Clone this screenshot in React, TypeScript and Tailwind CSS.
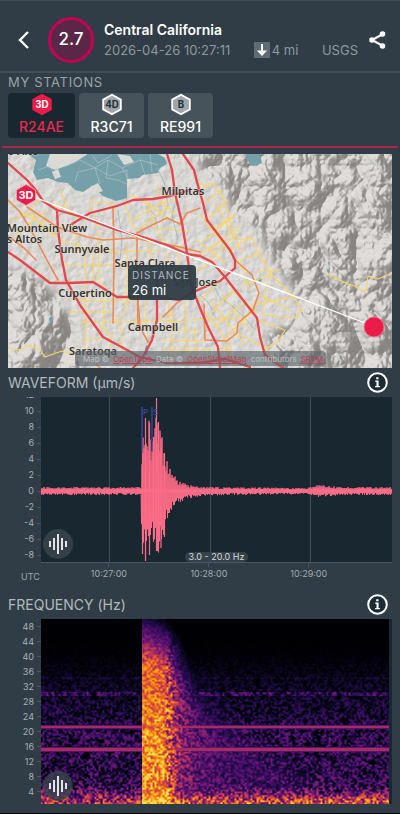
import { useEffect, useRef } from "react";

function createRandom(seed: number) {
  let state = seed;
  return () => {
    state = (state * 1664525 + 1013904223) % 4294967296;
    return state / 4294967296;
  };
}

function interpolate(points: number[][], x: number) {
  if (x <= points[0][0]) return points[0][1];
  for (let i = 1; i < points.length; i++) {
    const [x0, y0] = points[i - 1];
    const [x1, y1] = points[i];
    if (x <= x1) return y0 + ((y1 - y0) * (x - x0)) / (x1 - x0);
  }
  return points[points.length - 1][1];
}

/* ---------- header ---------- */

function Header() {
  return (
    <header className="flex h-[73px] items-center border-t border-b-2 border-t-[#3f4d55] border-b-[#414e57] pt-2 pr-2 pl-3">
      <button type="button" aria-label="Back" className="flex h-8 w-6 items-center justify-center">
        <svg viewBox="0 0 12 18" className="h-[18px] w-3" fill="none" stroke="#fff" strokeWidth="2.4">
          <path d="M10 1 2 9l8 8" />
        </svg>
      </button>
      <div className="ml-3 flex size-[46px] shrink-0 items-center justify-center rounded-full border-3 border-[#c40250] bg-[#5b2748] text-[17px] font-medium text-white">
        2.7
      </div>
      <div className="ml-2.5 min-w-0 flex-1">
        <h1 className="text-sm leading-5 font-semibold text-white">Central California</h1>
        <div className="flex h-5 items-center text-[13px] leading-5 text-[#8f989d]">
          <time>2026-04-26 10:27:11</time>
          <span className="ml-auto flex items-center gap-0.5">
            <svg viewBox="0 0 16 16" className="size-4">
              <path d="M0 0h16v16H0z" fill="#5f6b72" />
              <path d="M8 2v8" stroke="#fff" strokeWidth="2" />
              <path d="M3 8.500 8 14l5-5.500z" fill="#fff" />
            </svg>
            4 mi
          </span>
          <span className="mr-1 ml-auto">USGS</span>
        </div>
      </div>
      <button type="button" aria-label="Share" className="flex h-8 w-[30px] items-center justify-center">
        <svg viewBox="0 0 18 20" className="h-[20px] w-[18px]" fill="#fff">
          <path d="M15 4 4 10l11 6" fill="none" stroke="#fff" strokeWidth="2" />
          <circle cx="14.500" cy="4" r="2.800" />
          <circle cx="4" cy="10" r="2.800" />
          <circle cx="14.500" cy="16" r="2.800" />
        </svg>
      </button>
    </header>
  );
}

/* ---------- stations ---------- */

const STATIONS = [
  { name: "R24AE", kind: "3D", active: true },
  { name: "R3C71", kind: "4D", active: false },
  { name: "RE991", kind: "B", active: false },
];

function Hexagon({ label, active }: { label: string; active: boolean }) {
  return (
    <svg viewBox="0 0 24 26" className="h-[26px] w-6">
      <path
        d="M12 2 22 7.500v11L12 24 2 18.500v-11z"
        fill={active ? "#ea1c48" : "#a0a6ab"}
        stroke={active ? "#ea1c48" : "#fff"}
        strokeWidth="2"
      />
      <text x="12" y="17" textAnchor="middle" className="font-['Inter',sans-serif] text-[11px] font-bold" fill={active ? "#fff" : "#22303a"}>
        {label}
      </text>
    </svg>
  );
}

function Stations() {
  return (
    <section className="mx-0.5 border-b-2 border-[#a82a48] px-1.5 pb-2">
      <h2 className="h-5 text-[13px] leading-[18px] tracking-wider text-[#9aa2a6]">MY STATIONS</h2>
      <div className="flex gap-1">
        {STATIONS.map((s) => (
          <button
            key={s.name}
            type="button"
            aria-pressed={s.active}
            className={
              s.active
                ? "flex h-[45px] w-[67px] flex-col items-center rounded bg-[#182730] text-[#ea2a4c]"
                : "flex h-[45px] w-[65px] flex-col items-center rounded bg-[#46535b] text-white"
            }
          >
            <Hexagon label={s.kind} active={s.active} />
            <span className="text-sm leading-[22px] font-medium">{s.name}</span>
          </button>
        ))}
      </div>
    </section>
  );
}

/* ---------- map ---------- */

const RED_ROADS = [
  "M8 163 27 180 35 189 43 201 57 210 82 217 117 230 143 237 167 245 187 254 200 256 212 262 225 277 243 300 257 318 260 337 265 355 283 368",
  "M72 224 90 213 117 206 133 200 153 199 170 196 190 190",
  "M167 154 172 170 175 193 182 223 187 253 190 275 193 290 200 308 208 327 218 347 220 368",
  "M183 154 194 170 197 182 203 203 207 220 220 237 230 250 235 260 235 268 220 281 200 289 190 294 180 300 157 297 117 297 93 282 68 283 50 283 20 260 8 252",
  "M57 210 58 230 62 260 66 280 80 305 103 337 140 357 166 363 200 363 225 359 250 367",
  "M157 276 157 320 152 340 143 357 133 368",
];

const ORANGE_ROADS = [
  "M8 200 20 212 30 228 48 262 58 280",
  "M8 236 24 248 36 260",
  "M27 207 57 227 87 237 103 240 133 238 180 247 200 252",
  "M113 208 114 260 113 323",
  "M138 330 137 260 137 233 150 226 167 218 180 224 187 213 200 208",
  "M235 260 252 275 259 293 253 310 238 323 237 333 227 341 205 340 204 304",
  "M138 300 140 327 148 342",
  "M163 317 177 303 193 290",
  "M86 352 100 368",
];

const YELLOW_ROADS = [
  "M90 213 91 201 113 204 114 210",
  "M20 212 40 222 60 240 90 250 118 252 160 250",
  "M62 265 115 265 160 267 200 270",
  "M70 250 112 250M70 300 113 301 135 300",
  "M8 222 25 215 40 200M15 235 45 210",
  "M85 252 86 320 85 352M98 240 99 282",
  "M80 322 113 322 122 322 160 320 185 322",
  "M68 312 113 312M86 340 102 338",
  "M125 203 130 220 137 233M130 195 150 205 168 218",
  "M146 199 150 215 160 235 167 245",
  "M133 220 157 205 174 200M140 228 168 207",
  "M127 245 127 297 126 310 115 322",
  "M150 240 150 300M166 250 168 300 170 325",
  "M157 186 160 200 175 215M160 228 190 232",
  "M178 245 178 300M145 280 190 280",
  "M200 189 213 183 222 196 228 212 232 230 240 240 252 238 258 252 263 262",
  "M204 204 222 190M207 220 228 200M212 230 235 215M196 182 210 186",
  "M200 215 232 255M215 202 242 252M205 240 235 215M210 250 240 226",
  "M228 252 252 236M236 262 262 252M196 240 224 262",
  "M200 270 235 235M200 255 222 240",
  "M240 262 250 290M262 258 272 275 293 297",
  "M258 272 280 270M242 285 272 275M252 305 294 297 302 311 295 318 263 315",
  "M262 296 290 310M270 270 262 314",
  "M225 277 200 300M235 288 212 312M245 302 217 325M252 312 225 338",
  "M210 300 245 345M205 312 232 348M222 295 250 330M232 290 256 312",
  "M190 320 240 318M160 340 205 341M163 350 232 350",
  "M172 310 172 360M185 300 186 365M195 328 197 366M160 330 200 330",
  "M258 320 285 330 278 342 264 350M240 335 262 345 280 365",
  "M225 345 235 368M100 327 112 335 108 355M120 325 122 350",
  "M8 348 20 350 30 345 40 350 45 357 62 351 72 355 86 352",
  "M327 274 340 280 348 284 355 286 366 292 368 276 378 279 392 273",
  "M45 202 66 207 80 220M60 190 68 207M30 213 52 235M48 216 38 232",
  "M60 230 75 222M72 224 80 250M95 215 100 240",
  "M103 283 104 330M145 300 147 330M93 254 94 280",
];

function Road({ paths, color, width }: { paths: string[]; color: string; width: number }) {
  return (
    <g fill="none" stroke={color} strokeWidth={width} strokeLinejoin="round" strokeLinecap="round">
      {paths.map((d) => (
        <path key={d} d={d} />
      ))}
    </g>
  );
}

const TOWNS = [
  { name: "Palo Alto", x: 15, y: 155 },
  { name: "Milpitas", x: 183, y: 195 },
  { name: "Mountain View", x: 47, y: 232 },
  { name: "Los Altos", x: 18, y: 243 },
  { name: "Sunnyvale", x: 82, y: 253 },
  { name: "Santa Clara", x: 145, y: 267 },
  { name: "San Jose", x: 195, y: 286 },
  { name: "Cupertino", x: 85, y: 297 },
  { name: "Campbell", x: 153, y: 331 },
  { name: "Saratoga", x: 93, y: 355 },
];

function DistanceMap() {
  return (
    <section aria-label="Distance map" className="relative mx-2 mt-1.5 overflow-hidden">
      <svg viewBox="8 154 384 214" className="block w-full" preserveAspectRatio="xMidYMid slice">
        <defs>
          <filter id="relief" x="0" y="0" width="100%" height="100%" colorInterpolationFilters="sRGB">
            <feTurbulence type="turbulence" baseFrequency="0.014 0.012" numOctaves="5" seed="23" />
            <feGaussianBlur stdDeviation="0.500" />
            <feDiffuseLighting surfaceScale="24" diffuseConstant="1.050" lightingColor="#fff">
              <feDistantLight azimuth="215" elevation="50" />
            </feDiffuseLighting>
            <feComponentTransfer>
              <feFuncR type="table" tableValues="0.530 0.550 0.590 0.650 0.740 0.830 0.880" />
              <feFuncG type="table" tableValues="0.520 0.540 0.580 0.640 0.730 0.820 0.870" />
              <feFuncB type="table" tableValues="0.510 0.530 0.570 0.630 0.715 0.805 0.855" />
            </feComponentTransfer>
          </filter>
          <filter id="plain" x="0" y="0" width="100%" height="100%" colorInterpolationFilters="sRGB">
            <feTurbulence type="fractalNoise" baseFrequency="0.120" numOctaves="3" seed="4" />
            <feDiffuseLighting surfaceScale="1" diffuseConstant="1.100" lightingColor="#fff">
              <feDistantLight azimuth="215" elevation="52" />
            </feDiffuseLighting>
            <feComponentTransfer>
              <feFuncR type="linear" slope="0.450" intercept="0.460" />
              <feFuncG type="linear" slope="0.450" intercept="0.453" />
              <feFuncB type="linear" slope="0.450" intercept="0.443" />
            </feComponentTransfer>
          </filter>
          <filter id="soften">
            <feGaussianBlur stdDeviation="4" />
          </filter>
          <mask id="hills" maskUnits="userSpaceOnUse" x="8" y="154" width="384" height="214">
            <g fill="#fff" filter="url(#soften)">
              <path d="M200 140h210v240H288l-14-22-8-24 22-10 12-16-8-22-22-28-10-26-26-20-12-26-22-16z" />
              <path d="M0 268l30 4 24 22 16 22 10 24-2 14 20 30H0z" />
            </g>
          </mask>
        </defs>
        <rect x="8" y="154" width="384" height="214" fill="#dcdad7" />
        <rect x="8" y="154" width="384" height="214" filter="url(#plain)" />
        <g mask="url(#hills)">
          <rect x="8" y="154" width="384" height="214" filter="url(#relief)" />
        </g>
        <g fill="#76a0a9">
          <path d="M28 154 36 160 33 172 37 180 48 178 58 182 68 183 75 190 83 192 92 186 103 196 116 201 127 198 127 183 127 179 139 178 143 175 158 173 160 168 167 164 165 158 158 154z" />
          <path d="M246 154 249 163 253 166 262 163 260 154z" />
          <path d="M256 279 262 278 261 282z M326 268l4 3-1 3z M49 318l3-2 1 4-3 5z M146 345l3 2-2 8-3-2z" />
        </g>
        <g fill="#dad9d6">
          <path d="M50 154 88 154 75 162 66 166 55 170 46 166z" />
          <path d="M90 187 98 183 103 191 96 193z M117 154 130 156 134 162 124 165z M52 172l6-3 3 8-6 2z" />
        </g>
        <g fill="none" stroke="#c3d0d2" strokeWidth="0.500">
          <path d="M66 166 80 160 95 168 108 160 122 168 140 160 158 165M75 182 78 172 95 168 100 184M108 160 106 178 118 180 127 184M95 168 110 176 127 170 127 182M122 168 128 178M140 160 145 175M38 170 50 166 56 180M92 155 98 163 112 155M150 154 152 172" />
        </g>
        <g fill="none" stroke="#8fb3ba" strokeWidth="0.700">
          <path d="M157 167 165 185 168 205 162 220M145 205 155 215 158 230M118 210 122 240 120 260M213 284 220 298 232 306 245 318 255 330M200 295 208 302 216 318M176 200 172 215 178 240" />
        </g>
        <Road paths={YELLOW_ROADS} color="#fad568" width={1.1} />
        <Road paths={ORANGE_ROADS} color="#ee8a51" width={1.6} />
        <Road paths={RED_ROADS} color="#e2474b" width={2.3} />
        <g textAnchor="middle" className="font-['Noto_Sans','Open_Sans',sans-serif] text-[11px] font-semibold" fill="#38332e" stroke="#e4e2df" strokeOpacity="0.500" strokeWidth="1.500" paintOrder="stroke">
          {TOWNS.map((t) => (
            <text key={t.name} x={t.x} y={t.y}>
              {t.name}
            </text>
          ))}
        </g>
        <path d="M26 194 373 326" stroke="#fff" strokeWidth="1.300" />
        <path d="M26 184.500 35.500 190v10L26 205.500 16.500 200v-10z" fill="#ea1c48" stroke="#f0a0ae" strokeWidth="1" />
        <text x="26" y="199" textAnchor="middle" fill="#fff" className="font-['Inter',sans-serif] text-[11px] font-bold">
          3D
        </text>
        <circle cx="374" cy="327" r="10" fill="#ea1c48" stroke="#ee6f86" strokeWidth="1" />
      </svg>
      <div className="absolute top-[111px] left-[120px] h-[35px] w-[68px] rounded bg-[#2f3d46]/95 px-1 pt-0.5 text-white">
        <div className="text-[10px] leading-4 tracking-widest text-[#b5bbbe]">DISTANCE</div>
        <div className="text-[13px] leading-[14px]">26 mi</div>
      </div>
      <div className="absolute bottom-0.5 left-[67px] flex h-[15px] w-[251px] items-center gap-1 rounded-sm bg-[#5b666c]/65 pl-2 text-[8px] whitespace-nowrap text-[#bcc0c1]">
        <span>Map ©</span>
        <a href="#opentopomap" className="text-[#bc4355] underline">OpenTopo</a>
        <span>Data ©</span>
        <a href="#openstreetmap" className="text-[#bc4355] underline">OpenStreetMap</a>
        <span>contributors</span>
        <a href="#srtm" className="text-[#bc4355] underline">SRTM</a>
      </div>
    </section>
  );
}

/* ---------- charts ---------- */

function ChartTitle({ children }: { children: string }) {
  return (
    <div className="flex h-[29px] items-center justify-between pr-3 pl-2">
      <h2 className="text-sm text-[#b3b9bc]">{children}</h2>
      <button type="button" aria-label={"About " + children} className="size-[21px]">
        <svg viewBox="0 0 21 21" className="size-[21px]">
          <circle cx="10.500" cy="10.500" r="9.300" fill="#1b2a33" stroke="#fff" strokeWidth="2" />
          <path d="M9.200 5.200h2.300v2H9.200zM8.300 8.600h3.300v5.300h1.300v1.300H8.100v-1.300h1.400V9.900H8.300z" fill="#fff" />
        </svg>
      </button>
    </div>
  );
}

function SoundButton({ label }: { label: string }) {
  return (
    <button type="button" aria-label={label} className="absolute bottom-[3px] left-0.5 size-[30px] rounded-full bg-[#3a464e]/80">
      <svg viewBox="0 0 30 30" className="size-[30px]" stroke="#e3e3e6" strokeWidth="2">
        <path d="M7 12v6M11 9v12M15 5v20M19 9v12M23 12v6" />
      </svg>
    </button>
  );
}

const TOP_ENVELOPE = [
  [0, 4], [100, 4], [101, 40], [102, 56], [104, 76], [106, 58], [108, 71], [110, 50], [112, 54], [113, 72],
  [115, 97], [116, 97], [117, 76], [119, 68], [121, 56], [123, 44], [126, 30], [130, 21], [135, 13],
  [140, 9], [148, 6], [160, 4], [185, 4], [265, 3], [277, 6], [290, 5], [300, 4], [351, 4],
];
const BOTTOM_ENVELOPE = [
  [0, 4], [100, 4], [101, 66], [104, 73], [107, 68], [109, 47], [112, 52], [114, 64], [118, 62], [121, 54],
  [123, 50], [126, 30], [130, 24], [134, 14], [139, 12], [145, 8], [160, 5], [185, 4], [265, 3], [277, 6],
  [290, 5], [300, 4], [351, 4],
];

function buildTrace() {
  const random = createRandom(27);
  const zero = 94;
  let path = "M0 94";
  for (let i = 0; i < 702; i++) {
    const x = i / 2;
    const strength = 0.5 + 0.5 * random();
    const up = i % 2 === 0;
    const y = up ? zero - interpolate(TOP_ENVELOPE, x) * strength : zero + interpolate(BOTTOM_ENVELOPE, x) * strength;
    path += "L" + x + " " + y.toFixed(1);
  }
  return path;
}

const TRACE = buildTrace();
/* Tallest single swings of the P and S arrivals, above and below the zero line. */
const PEAKS = "M101.500 56V157M104.500 21V164M108.500 26V158M112.500 40V142M115.500 1V154M117.500 25V152M120 42V151M123.500 56V140";
const AMPLITUDES = [12, 10, 8, 6, 4, 2, 0, -2, -4, -6, -8];
const TIMES = ["10:27:00", "10:28:00", "10:29:00"];

function Waveform() {
  return (
    <section>
      <ChartTitle>WAVEFORM (µm/s)</ChartTitle>
      <div className="flex pr-2">
        <div className="flex h-[166px] w-[41px] flex-col justify-end overflow-hidden">
          {AMPLITUDES.map((a) => (
            <div key={a} className="flex h-4 shrink-0 items-center justify-end gap-[3px] text-[9px] text-[#a9b0b4]">
              {a}
              <i className="h-px w-1 bg-[#4c5961]" />
            </div>
          ))}
        </div>
        <div className="relative h-[166px] flex-1 border-b border-[#4a5860]">
          <svg viewBox="0 0 351 165" preserveAspectRatio="none" className="block h-full w-full bg-[#192830]">
            <path d="M68.500 0v165M169.500 0v165M269.500 0v165" stroke="#3f4c55" strokeWidth="1.200" />
            <path d={TRACE} fill="none" stroke="#fd6d88" strokeWidth="0.900" />
            <path d={PEAKS} fill="none" stroke="#fd6d88" strokeWidth="1.200" />
            <path d="M0 94H351" stroke="#fd6d88" strokeWidth="3" />
            <path d="M101 10v45M111 10v45" stroke="#3d4da8" strokeWidth="1.200" />
            <g fill="#3d4da8" className="font-['Inter',sans-serif] text-[8px]">
              <text x="102" y="18">P</text>
              <text x="112" y="18">S</text>
            </g>
          </svg>
          <SoundButton label="Play waveform" />
          <div className="absolute bottom-0 left-1/2 -translate-x-1/2 rounded-md bg-[#35424a] px-1 text-[9px] leading-[10px] whitespace-nowrap text-[#d5d8da]">
            3.0 - 20.0 Hz
          </div>
        </div>
      </div>
      <div className="flex h-[27px] pr-2 text-[9px] text-[#a3aaae]">
        <div className="w-[41px] pt-2 pl-[21px] leading-3">UTC</div>
        <div className="grid flex-1 grid-cols-[3fr_3fr_3fr_1fr] pl-[18px]">
          {TIMES.map((t) => (
            <div key={t} className="flex flex-col items-center leading-3">
              <i className="mb-px h-1 w-px bg-[#4a5860]" />
              {t}
            </div>
          ))}
        </div>
      </div>
    </section>
  );
}

const PALETTE = [
  [0, 0, 4], [18, 10, 48], [52, 12, 92], [88, 18, 110], [125, 30, 110], [165, 44, 96],
  [203, 65, 73], [233, 97, 45], [247, 140, 14], [251, 185, 35], [250, 226, 100],
];

function paletteColor(value: number) {
  const v = Math.max(0, Math.min(0.999, value)) * 10;
  const i = Math.floor(v);
  const f = v - i;
  return PALETTE[i].map((c, k) => c + (PALETTE[Math.min(10, i + 1)][k] - c) * f);
}

/* Smooth noise: random grains on a coarse lattice, blended between lattice points. */
function createGrain(columns: number, rows: number, seed: number) {
  const random = createRandom(seed);
  const grid = Array.from({ length: columns * rows }, () => random());
  return (x: number, y: number) => {
    const x0 = Math.floor(x);
    const y0 = Math.floor(y);
    const at = (cx: number, cy: number) => grid[(cy % rows) * columns + (cx % columns)];
    const top = at(x0, y0) + (at(x0 + 1, y0) - at(x0, y0)) * (x - x0);
    const bottom = at(x0, y0 + 1) + (at(x0 + 1, y0 + 1) - at(x0, y0 + 1)) * (x - x0);
    return top + (bottom - top) * (y - y0);
  };
}

const BACKGROUND_LEVEL = [
  [1, 0.5], [3, 0.4], [6, 0.32], [10, 0.28], [14, 0.28], [20, 0.27], [24, 0.2], [28, 0.16], [32, 0.12], [36, 0.06], [41, 0.01], [46, 0],
];
const CORNER_FREQUENCY = [
  [0, 50], [10, 49], [24, 47], [36, 43], [48, 36], [60, 32], [100, 24], [150, 16], [220, 8], [250, 4],
];
const BURST_DECAY = [
  [0, 1], [20, 1], [26, 0.86], [32, 0.66], [40, 0.5], [55, 0.38], [80, 0.31], [120, 0.26], [180, 0.2], [250, 0],
];

function drawSpectrogram(canvas: HTMLCanvasElement) {
  const context = canvas.getContext("2d");
  if (!context) return;
  const { width, height } = canvas;
  const grain = createGrain(197, 109, 91);
  const image = context.createImageData(width, height);
  for (let row = 0; row < height; row++) {
    const f = 50.1 - (49.1 * row) / height;
    const level = interpolate(BACKGROUND_LEVEL, f);
    for (let col = 0; col < width; col++) {
      const noise = grain(col / 2, row / 1.8);
      const contrast = Math.max(0, Math.min(1, (noise - 0.5) * 1.3 + 0.5));
      let value = level * (1.4 * contrast - 0.15);
      if (f < 6) value += level * 0.5 * Math.min(1, (6 - f) / 3);
      const after = col - 101;
      if (after >= 0) {
        const margin = interpolate(CORNER_FREQUENCY, after) - f;
        const rolloff = Math.max(0, Math.min(1, margin / 14 + 0.25));
        const decay = interpolate(BURST_DECAY, after);
        const peak = f > 18 ? 0.8 - (f - 18) * 0.006 : 0.8;
        const spread = after < 24 ? 0.5 : 1;
        value = Math.max(value, peak * rolloff * decay * (1 - spread / 2 + spread * contrast));
        if (f < 4) value += 0.14 * Math.min(1, (4 - f) / 2);
      }
      if (Math.abs(f - 30.3) < 0.5) value = Math.max(value, 0.34 * contrast + 0.02);
      if (Math.abs(f - 34.5) < 0.3) value = Math.max(value, 0.16 * contrast);
      const line = Math.min(Math.abs(f - 21.6), Math.abs(f - 15.6));
      if (line < 0.3) value = Math.max(value, 0.5);
      else if (line < 0.6) value = Math.max(value, 0.3);
      const [r, g, b] = paletteColor(value);
      const offset = (row * width + col) * 4;
      image.data[offset] = r;
      image.data[offset + 1] = g;
      image.data[offset + 2] = b;
      image.data[offset + 3] = 255;
    }
  }
  context.putImageData(image, 0, 0);
}

const FREQUENCIES = [48, 44, 40, 36, 32, 28, 24, 20, 16, 12, 8, 4];

function Spectrogram() {
  const canvasRef = useRef<HTMLCanvasElement>(null);
  useEffect(() => {
    if (canvasRef.current) drawSpectrogram(canvasRef.current);
  }, []);
  return (
    <section>
      <ChartTitle>FREQUENCY (Hz)</ChartTitle>
      <div className="flex pr-2">
        <div className="w-[41px]">
          {FREQUENCIES.map((f) => (
            <div key={f} className="flex h-[15px] items-center justify-end gap-[3px] text-[9px] text-[#a9b0b4]">
              {f}
              <i className="h-px w-1 bg-[#4c5961]" />
            </div>
          ))}
        </div>
        <div className="relative h-[185px] flex-1 bg-[#192830] pr-[3px]">
          <canvas ref={canvasRef} width={348} height={185} className="block h-full w-full" />
          <SoundButton label="Play spectrogram" />
        </div>
      </div>
    </section>
  );
}

export default function App() {
  return (
    <main className="border-b border-black bg-[#303d46] pb-[9px] font-['Inter',sans-serif]">
      <Header />
      <Stations />
      <DistanceMap />
      <Waveform />
      <Spectrogram />
    </main>
  );
}
